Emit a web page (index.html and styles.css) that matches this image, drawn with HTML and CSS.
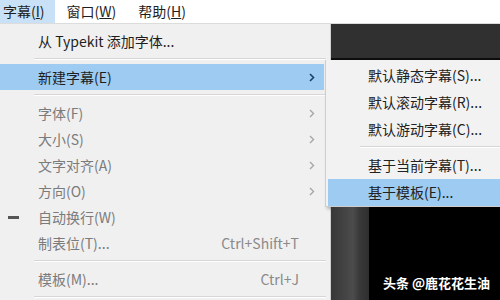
FILE: index.html
```html
<!DOCTYPE html>
<html lang="zh-CN">
<head>
	<meta charset="UTF-8">
	<title>字幕菜单</title>
	<link rel="stylesheet" href="styles.css">
</head>
<body>
	<div id="screen">
		<ul id="menubar">
			<li class="open">字幕(<u>I</u>)</li>
			<li>窗口(<u>W</u>)</li>
			<li>帮助(<u>H</u>)</li>
		</ul>
		<div id="workspace">
			<ul id="menu">
				<li class="item"><span class="icon"></span><span class="label">从 Typekit 添加字体...</span><span class="key"></span><span class="arrow"></span></li>
				<li class="sep"></li>
				<li class="item hover"><span class="icon"></span><span class="label">新建字幕(E)</span><span class="key"></span><span class="arrow"><svg width="6" height="9" viewBox="0 0 6 9"><path d="M1 1l3.5 3.5L1 8" fill="none" stroke="#1d3f6b" stroke-width="1.6"/></svg></span></li>
				<li class="sep"></li>
				<li class="item off"><span class="icon"></span><span class="label">字体(F)</span><span class="key"></span><span class="arrow"><svg width="6" height="9" viewBox="0 0 6 9"><path d="M1 1l3.5 3.5L1 8" fill="none" stroke="#a6a6a6" stroke-width="1.4"/></svg></span></li>
				<li class="item off"><span class="icon"></span><span class="label">大小(S)</span><span class="key"></span><span class="arrow"><svg width="6" height="9" viewBox="0 0 6 9"><path d="M1 1l3.5 3.5L1 8" fill="none" stroke="#a6a6a6" stroke-width="1.4"/></svg></span></li>
				<li class="item off"><span class="icon"></span><span class="label">文字对齐(A)</span><span class="key"></span><span class="arrow"><svg width="6" height="9" viewBox="0 0 6 9"><path d="M1 1l3.5 3.5L1 8" fill="none" stroke="#a6a6a6" stroke-width="1.4"/></svg></span></li>
				<li class="item off"><span class="icon"></span><span class="label">方向(O)</span><span class="key"></span><span class="arrow"><svg width="6" height="9" viewBox="0 0 6 9"><path d="M1 1l3.5 3.5L1 8" fill="none" stroke="#a6a6a6" stroke-width="1.4"/></svg></span></li>
				<li class="item off"><span class="icon"><i class="dash"></i></span><span class="label">自动换行(W)</span><span class="key"></span><span class="arrow"></span></li>
				<li class="item off"><span class="icon"></span><span class="label">制表位(T)...</span><span class="key">Ctrl+Shift+T</span><span class="arrow"></span></li>
				<li class="sep"></li>
				<li class="item off"><span class="icon"></span><span class="label">模板(M)...</span><span class="key">Ctrl+J</span><span class="arrow"></span></li>
				<li class="sep"></li>
			</ul>
			<div id="side">
				<div id="panel"></div>
				<ul id="submenu">
					<li class="item">默认静态字幕(S)...</li>
					<li class="item">默认滚动字幕(R)...</li>
					<li class="item">默认游动字幕(C)...</li>
					<li class="sep"></li>
					<li class="item">基于当前字幕(T)...</li>
					<li class="item hover">基于模板(E)...</li>
				</ul>
				<div id="monitor">
					<div class="gutter"></div>
					<div class="black"></div>
				</div>
			</div>
		</div>
		<div id="mark">头条 @鹿花花生油</div>
	</div>
</body>
</html>
```

FILE: styles.css
```css
*{
	margin: 0;
	padding: 0;
}
ul,ol{
	list-style: none;
}
body{
	font-family: "Noto Sans CJK SC", "Noto Sans", sans-serif;
	font-size: 14px;
	color: #1e1e1e;
}
#screen{
	width: 500px;
	height: 300px;
	overflow: hidden;
	position: relative;
	background-color: #fff;
	display: flex;
	flex-direction: column;
}
#menubar{
	height: 23px;
	display: flex;
	border-bottom: 1px solid #dcdcdc;
	background-color: #fff;
}
#menubar li{
	height: 23px;
	line-height: 22px;
	padding: 0 10px 0 3px;
	margin-right: 9px;
}
#menubar li u{
	text-decoration: underline;
	text-underline-offset: 1px;
}
#menubar .open{
	background-color: #c9e1f6;
}
#workspace{
	flex: 1;
	display: flex;
}
#menu{
	width: 330px;
	background-color: #f0f0f0;
	border-right: 1px solid #cfcfcf;
	padding-top: 4px;
}
#menu .item{
	height: 26px;
	display: grid;
	grid-template-columns: 38px 1fr auto 25px;
	align-items: center;
	margin-right: 6px;
}
#menu .hover{
	background-color: #9dcbf1;
}
#menu .off{
	color: #7b7b7b;
}
#menu .key{
	color: #8a8a8a;
}
#menu .arrow{
	display: flex;
	justify-content: center;
}
.icon{
	display: flex;
	align-items: center;
	padding-left: 8px;
}
.dash{
	width: 11px;
	height: 3px;
	background-color: #555;
}
#menu .sep{
	margin: 4px 4px 4px 34px;
	border-top: 1px solid #d6d6d6;
	border-bottom: 1px solid #fff;
}
#side{
	flex: 1;
	display: flex;
	flex-direction: column;
}
#panel{
	height: 34px;
	background-color: #303030;
	border-bottom: 2px solid #0d0d0d;
}
#submenu{
	margin-left: -6px;
	padding-top: 2px;
	background-color: #f2f2f2;
	border-left: 1px solid #cdcdcd;
	border-bottom: 1px solid #cdcdcd;
	box-shadow: 2px 2px 3px rgba(0,0,0,0.25);
}
#submenu .item{
	height: 27px;
	line-height: 27px;
	padding-left: 40px;
	margin-left: 2px;
	color: #222;
}
#submenu .hover{
	background-color: #9dcbf1;
}
#submenu .sep{
	margin: 3px 0 4px 34px;
	border-top: 1px solid #d6d6d6;
	border-bottom: 1px solid #fff;
}
#monitor{
	flex: 1;
	display: flex;
}
.gutter{
	width: 38px;
	background: linear-gradient(to right, #383838 0, #444 14px, #4c4c4c 22px, #3a3a3a 28px, #2e2e2e 38px);
}
.black{
	flex: 1;
	background-color: #000;
}
#mark{
	position: absolute;
	right: 10px;
	bottom: 8px;
	color: #fff;
	font-size: 13px;
	font-weight: bold;
	text-shadow: 0 0 2px rgba(0,0,0,0.6);
}
```
